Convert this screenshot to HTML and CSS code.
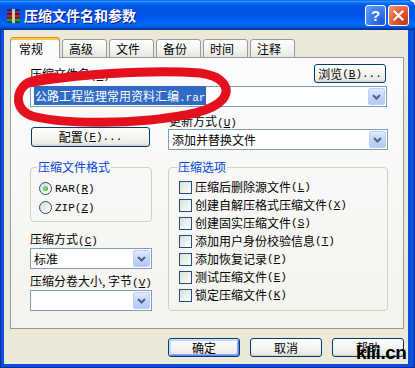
FILE: index.html
```html
<!DOCTYPE html>
<html lang="zh-CN">
<head>
<meta charset="utf-8">
<title>压缩文件名和参数</title>
<link rel="stylesheet" href="styles.css">
</head>
<body>
<div class="window">
  <div class="titlebar">
    <svg class="app-icon" width="16" height="16" viewBox="0 0 16 16">
      <rect x="1" y="2" width="13" height="4" fill="#7a2a8a"/>
      <rect x="1" y="6" width="13" height="4" fill="#c0202a"/>
      <rect x="1" y="10" width="13" height="4" fill="#2a9a3a"/>
      <path d="M1 2 H14 M1 6 H14 M1 10 H14 M1 14 H14" stroke="#111" stroke-width="1"/>
      <rect x="6" y="1" width="3" height="14" fill="#d8c8a0"/>
    </svg>
    <span class="title">压缩文件名和参数</span>
    <span class="caption-btn help">?</span>
    <span class="caption-btn close"><svg width="13" height="13" viewBox="0 0 13 13"><path d="M2.5 2.5 L10.5 10.5 M10.5 2.5 L2.5 10.5" stroke="#fff" stroke-width="2.2" stroke-linecap="square"/></svg></span>
  </div>
  <div class="client">
    <div class="tabs">
      <div class="tab active">常规</div>
      <div class="tab">高级</div>
      <div class="tab">文件</div>
      <div class="tab">备份</div>
      <div class="tab">时间</div>
      <div class="tab">注释</div>
    </div>
    <div class="panel">
      <div class="name-row">
        <span class="label">压缩文件名<span class="lat">(<u>A</u>)</span></span>
        <button class="btn browse">浏览<span class="lat">(<u>B</u>)...</span></button>
      </div>
      <div class="combo name-combo">
        <span class="value"><span class="selected">公路工程监理常用资料汇编<span class="lat">.rar</span></span></span>
        <span class="drop"><svg width="15" height="15" viewBox="0 0 15 15"><path d="M4 6 L7.5 9.5 L11 6" fill="none" stroke="#4d6185" stroke-width="2"/></svg></span>
      </div>
      <div class="options-grid">
        <div class="config-cell"><button class="btn config">配置<span class="lat">(<u>F</u>)...</span></button></div>
        <div class="update-cell">
          <span class="label">更新方式<span class="lat">(<u>U</u>)</span></span>
          <div class="combo">
            <span class="value">添加并替换文件</span>
            <span class="drop"><svg width="15" height="15" viewBox="0 0 15 15"><path d="M4 6 L7.5 9.5 L11 6" fill="none" stroke="#4d6185" stroke-width="2"/></svg></span>
          </div>
        </div>
        <div class="left-col">
          <fieldset class="group format">
            <legend>压缩文件格式</legend>
            <div class="choice"><span class="radio checked"></span><span class="lat">RAR(<u>R</u>)</span></div>
            <div class="choice"><span class="radio"></span><span class="lat">ZIP(<u>Z</u>)</span></div>
          </fieldset>
          <span class="label method-label">压缩方式<span class="lat">(<u>C</u>)</span></span>
          <div class="combo">
            <span class="value">标准</span>
            <span class="drop"><svg width="15" height="15" viewBox="0 0 15 15"><path d="M4 6 L7.5 9.5 L11 6" fill="none" stroke="#4d6185" stroke-width="2"/></svg></span>
          </div>
          <span class="label volume-label">压缩分卷大小, 字节<span class="lat">(<u>V</u>)</span></span>
          <div class="combo">
            <span class="value"></span>
            <span class="drop"><svg width="15" height="15" viewBox="0 0 15 15"><path d="M4 6 L7.5 9.5 L11 6" fill="none" stroke="#4d6185" stroke-width="2"/></svg></span>
          </div>
        </div>
        <fieldset class="group opts">
          <legend>压缩选项</legend>
          <div class="choice"><span class="check"></span>压缩后删除源文件<span class="lat">(<u>L</u>)</span></div>
          <div class="choice"><span class="check"></span>创建自解压格式压缩文件<span class="lat">(<u>X</u>)</span></div>
          <div class="choice"><span class="check"></span>创建固实压缩文件<span class="lat">(<u>S</u>)</span></div>
          <div class="choice"><span class="check"></span>添加用户身份校验信息<span class="lat">(<u>T</u>)</span></div>
          <div class="choice"><span class="check"></span>添加恢复记录<span class="lat">(<u>P</u>)</span></div>
          <div class="choice"><span class="check"></span>测试压缩文件<span class="lat">(<u>E</u>)</span></div>
          <div class="choice"><span class="check"></span>锁定压缩文件<span class="lat">(<u>K</u>)</span></div>
        </fieldset>
      </div>
    </div>
    <div class="buttons">
      <button class="btn action default">确定</button>
      <button class="btn action">取消</button>
      <button class="btn action">帮助</button>
    </div>
  </div>
  <svg class="ink" width="415" height="368" viewBox="0 0 415 368">
    <path d="M28 83 C70 75 150 69 200 73 C223 76 231 88 223 99 C212 112 185 116 150 120 C110 124 58 123 32 116 C15 110 15 92 26 84 C32 80 44 78 56 77" fill="none" stroke="#e4111c" stroke-width="9" stroke-linecap="round"/>
  </svg>
  <div class="watermark">klii.cn</div>
</div>
</body>
</html>
```

FILE: styles.css
```css
* { box-sizing: border-box; }

html, body {
  margin: 0;
  padding: 0;
}

body {
  width: 415px;
  height: 368px;
  overflow: hidden;
  background: #ffffff;
  font: 12px/14px "Noto Sans CJK SC", "Liberation Sans", sans-serif;
  color: #000;
}

.window {
  position: relative;
  width: 415px;
  height: 368px;
  display: flex;
  flex-direction: column;
  background: #0b4fdd;
  border-top-right-radius: 8px;
  box-shadow: inset 1px 0 0 #0a2a9a, inset -1px 0 0 #0a2a9a, inset 0 -1px 0 #0a2a9a;
  overflow: hidden;
}

.titlebar {
  height: 30px;
  flex: none;
  display: flex;
  align-items: center;
  padding: 0 6px 0 6px;
  background: linear-gradient(to bottom, #0058ee 0%, #3593ff 4%, #288eff 6%, #127dff 8%, #036ffc 10%, #0262ee 14%, #0057e5 20%, #0054e3 24%, #0055eb 56%, #005bf5 66%, #026afe 76%, #0062ef 86%, #0052d6 92%, #0040ab 94%, #003092 100%);
  border-top-right-radius: 8px;
}

.app-icon {
  flex: none;
  margin-top: 1px;
}

.title {
  flex: 1;
  margin-left: 2px;
  color: #fff;
  font-weight: bold;
  font-size: 14px;
  line-height: 16px;
  text-shadow: 1px 1px 0 #0f1089;
}

.caption-btn {
  width: 21px;
  height: 21px;
  border: 1px solid #fff;
  border-radius: 3px;
  display: flex;
  align-items: center;
  justify-content: center;
  color: #fff;
  font: bold 15px/1 "Liberation Sans", sans-serif;
}

.help {
  background: radial-gradient(circle at 85% 85%, #1d5ad9 0%, #3577ec 45%, #6e9ff6 100%);
  margin-right: 2px;
}

.close {
  background: radial-gradient(circle at 85% 85%, #c13b17 0%, #e05530 45%, #f09b7c 100%);
}

.client {
  flex: 1;
  margin: 0 7px 4px 4px;
  background: #ece9d8;
  padding: 7px 4px 0 6px;
  display: flex;
  flex-direction: column;
}

.tabs {
  display: flex;
  align-items: flex-end;
  height: 21px;
  margin-bottom: -1px;
  position: relative;
  z-index: 1;
}

.tab {
  width: 45px;
  height: 19px;
  margin-left: 2px;
  border: 1px solid #919b9c;
  border-radius: 3px 3px 0 0;
  background: linear-gradient(to bottom, #ffffff, #f3f3ef 60%, #e6e5df);
  padding: 2px 0 0 6px;
  line-height: 14px;
}

.tab.active {
  width: 50px;
  height: 21px;
  margin-left: 0;
  margin-right: 0;
  border-top: 1px solid #e68b2c;
  border-bottom: 0;
  box-shadow: inset 0 2px 0 #ffc73c;
  background: #fcfcfe;
  padding: 4px 0 0 8px;
}

.tab.active + .tab {
  margin-left: 2px;
}

.panel {
  height: 272px;
  flex: none;
  border: 1px solid #919b9c;
  background: linear-gradient(to bottom, #fcfcfe, #f4f3ee);
  padding: 6px 16px 0 19px;
  display: flex;
  flex-direction: column;
}

.name-row {
  height: 19px;
  display: flex;
  align-items: center;
  justify-content: space-between;
}

.label {
  display: block;
  height: 14px;
  line-height: 14px;
  white-space: nowrap;
}

.lat {
  font-family: "Liberation Mono", monospace;
  font-size: 11px;
}

.lat u {
  text-decoration-thickness: 1px;
  text-underline-offset: 1px;
}

.btn {
  font: inherit;
  color: #000;
  padding: 0;
  border: 1px solid #003c74;
  border-radius: 3px;
  background: linear-gradient(to bottom, #ffffff 0%, #f7f7f4 40%, #ecebe6 85%, #d6d0c5 100%);
  display: flex;
  align-items: center;
  justify-content: center;
  line-height: 14px;
}

.browse {
  width: 72px;
  height: 19px;
  margin-right: 1px;
}

.combo {
  height: 21px;
  border: 1px solid #7f9db9;
  background: #fff;
  display: flex;
  align-items: center;
  justify-content: space-between;
  padding: 1px;
}

.combo .value {
  padding-left: 2px;
  white-space: nowrap;
}

.name-combo {
  margin-top: 3px;
}

.selected {
  background: #316ac5;
  color: #fff;
  padding: 1px 1px;
}

.drop {
  width: 17px;
  height: 17px;
  flex: none;
  border: 1px solid #bad0fc;
  border-radius: 2px;
  background: linear-gradient(to bottom, #e0eafe, #c1d3fb 60%, #b4c8f6);
  display: flex;
  align-items: center;
  justify-content: center;
}

.options-grid {
  margin-top: 7px;
  display: grid;
  grid-template-columns: 122px 220px;
  column-gap: 16px;
  row-gap: 10px;
}

.config-cell {
  display: flex;
  align-items: flex-end;
  padding-bottom: 3px;
}

.config {
  width: 119px;
  height: 20px;
  margin-left: 1px;
}

.update-cell .label {
  margin-bottom: 1px;
  padding-left: 1px;
}

.left-col {
  display: flex;
  flex-direction: column;
}

.group {
  margin: 0;
  min-width: 0;
  border: 1px solid #d0d0bf;
  border-radius: 4px;
}

.group legend {
  color: #0046d5;
  padding: 0 1px;
  margin-left: -2px;
  line-height: 14px;
  height: 14px;
}

.format {
  padding: 5px 8px 4px 8px;
}

.format .choice {
  height: 19px;
}

.opts {
  padding: 4px 8px 6px 10px;
}

.opts .choice {
  height: 18px;
}

.choice {
  display: flex;
  align-items: center;
  white-space: nowrap;
}

.radio {
  width: 13px;
  height: 13px;
  flex: none;
  border: 1px solid #1c5180;
  border-radius: 50%;
  background: linear-gradient(135deg, #dcdcd7, #ffffff);
  margin-right: 3px;
  display: flex;
  align-items: center;
  justify-content: center;
}

.radio.checked::after {
  content: "";
  width: 5px;
  height: 5px;
  border-radius: 50%;
  background: radial-gradient(circle at 40% 40%, #8ee98a, #21a121);
}

.check {
  width: 13px;
  height: 13px;
  flex: none;
  border: 1px solid #1c5180;
  background: linear-gradient(135deg, #dcdcd7, #ffffff);
  margin-right: 3px;
}

.method-label {
  margin-top: 10px;
}

.volume-label {
  margin-top: 5px;
}

.left-col .combo {
  margin-top: 2px;
}

.buttons {
  margin-top: 9px;
  display: flex;
  justify-content: flex-end;
  gap: 10px;
}

.action {
  width: 72px;
  height: 19px;
}

.default {
  box-shadow: inset 1px 1px 0 #cee7ff, inset -1px -1px 0 #6982ee, inset 2px 2px 0 #bcd4f6, inset -2px -2px 0 #89adf0;
}

.ink {
  position: absolute;
  left: 0;
  top: 0;
  pointer-events: none;
}

.watermark {
  position: absolute;
  left: 356px;
  top: 343px;
  color: #000;
  font: bold 19px/20px "Liberation Sans", sans-serif;
  letter-spacing: -0.5px;
}
```
